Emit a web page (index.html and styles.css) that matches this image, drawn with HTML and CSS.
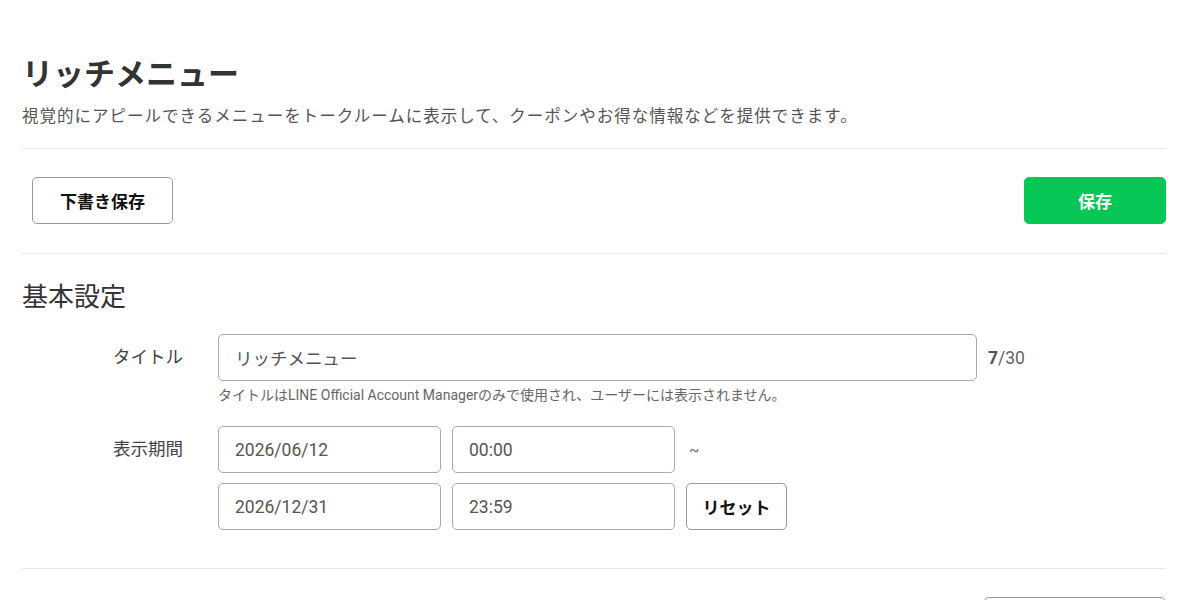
FILE: index.html
```html
<!doctype html>
<html lang="ja">
  <head>
    <meta charset="utf-8">
    <meta name="viewport" content="width=device-width, initial-scale=1">
    <link rel="stylesheet" href="styles.css">
    <title>リッチメニュー</title>
  </head>
  <body>
    <div class="page">
      <header class="page-head">
        <h1>リッチメニュー</h1>
        <p class="lead">視覚的にアピールできるメニューをトークルームに表示して、クーポンやお得な情報などを提供できます。</p>
      </header>

      <div class="toolbar">
        <button class="btn draft">下書き保存</button>
        <button class="btn primary">保存</button>
      </div>

      <section class="section">
        <h2>基本設定</h2>

        <div class="form-row">
          <label class="form-label" for="title">タイトル</label>
          <div class="form-field">
            <div class="inline">
              <input id="title" class="input wide" type="text" value="リッチメニュー">
              <span class="counter"><b>7</b>/30</span>
            </div>
            <p class="hint">タイトルはLINE Official Account Managerのみで使用され、ユーザーには表示されません。</p>
          </div>
        </div>

        <div class="form-row period">
          <label class="form-label" for="start-date">表示期間</label>
          <div class="form-field stack">
            <div class="inline">
              <input id="start-date" class="input date" type="text" value="2026/06/12">
              <input class="input date" type="text" value="00:00">
              <span class="tilde">~</span>
            </div>
            <div class="inline">
              <input class="input date" type="text" value="2026/12/31">
              <input class="input date" type="text" value="23:59">
              <button class="btn small">リセット</button>
            </div>
          </div>
        </div>
      </section>

      <div class="toolbar end">
        <button class="btn outline-wide">&nbsp;</button>
      </div>
    </div>
  </body>
</html>
```

FILE: styles.css
```css
html, body {
  margin: 0;
  background: #fff;
}
body {
  font-family: Roboto, "Noto Sans CJK JP", sans-serif;
  color: #333;
}
.page {
  width: 1144px;
  padding: 53px 0 0 22px;
}
.page-head h1 {
  margin: 0;
  font-size: 31px;
  line-height: 44px;
  font-weight: bold;
  color: #333;
}
.page-head .lead {
  margin: 7px 0 0;
  font-size: 16.5px;
  line-height: 26px;
  color: #555;
  letter-spacing: 1px;
}
.page-head {
  padding-bottom: 18px;
  border-bottom: 1px solid #e6e6e6;
}

.toolbar {
  display: flex;
  justify-content: space-between;
  align-items: center;
  padding: 28px 0 29px;
  border-bottom: 1px solid #e6e6e6;
}
.toolbar.end {
  justify-content: flex-end;
  border-bottom: none;
}

.btn {
  font-family: Roboto, "Noto Sans CJK JP", sans-serif;
  height: 47px;
  border: 1px solid #999;
  border-radius: 5px;
  background: #fff;
  color: #111;
  font-size: 17px;
  font-weight: bold;
  padding: 0;
  cursor: pointer;
}
.btn.draft {
  width: 141px;
  margin-left: 10px;
}
.btn.primary {
  width: 142px;
  background: #06c755;
  border-color: #06c755;
  color: #fff;
}
.btn.small {
  width: 101px;
}
.btn.outline-wide {
  width: 182px;
}

.section {
  padding: 25px 0 38px;
  border-bottom: 1px solid #e6e6e6;
}
.section h2 {
  margin: 0 0 19px;
  font-size: 26px;
  line-height: 36px;
  font-weight: normal;
  color: #333;
}

.form-row {
  display: grid;
  grid-template-columns: 161px 1fr;
  column-gap: 35px;
}
.form-row.period {
  margin-top: 21px;
}
.form-label {
  text-align: right;
  font-size: 17.5px;
  line-height: 47px;
  color: #444;
}
.form-field.stack {
  display: grid;
  row-gap: 10px;
}
.inline {
  display: flex;
  align-items: center;
  gap: 11px;
}

.input {
  box-sizing: border-box;
  height: 47px;
  padding: 0 16px;
  border: 1px solid #aaa;
  border-radius: 5px;
  font-family: Roboto, "Noto Sans CJK JP", sans-serif;
  font-size: 17.5px;
  color: #555;
  background: #fff;
  outline: none;
}
.input.wide {
  width: 759px;
}
.input.date {
  width: 223px;
}

.counter {
  font-size: 17.5px;
  color: #666;
}
.counter b {
  color: #555;
}
.tilde {
  margin-left: 3px;
  font-size: 15px;
  color: #666;
}
.hint {
  margin: 4px 0 0;
  font-size: 14px;
  line-height: 20px;
  color: #666;
}
```
